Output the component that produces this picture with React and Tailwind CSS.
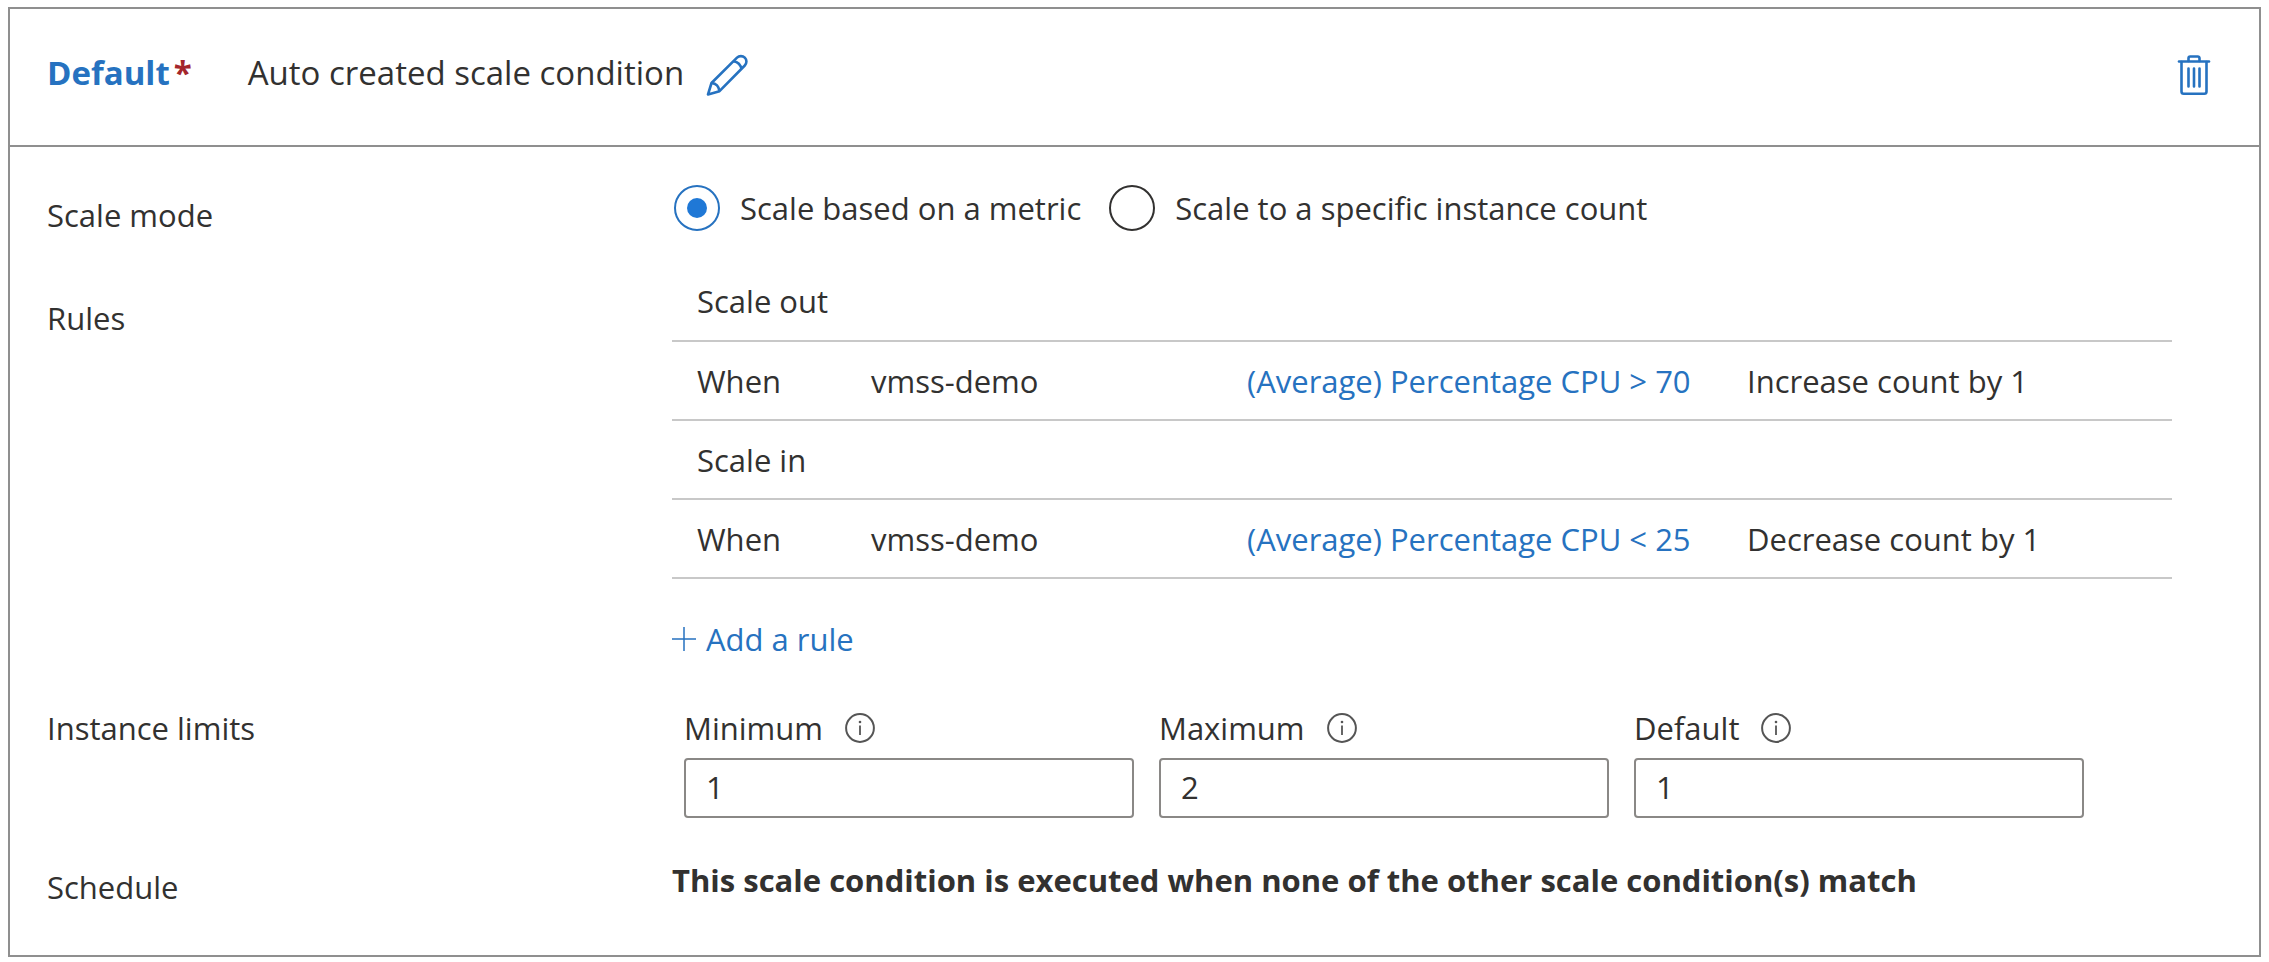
import { useState } from 'react';

const RULE_GROUPS = [
  {
    title: 'Scale out',
    rules: [{ resource: 'vmss-demo', metric: '(Average) Percentage CPU > 70', action: 'Increase count by 1' }],
  },
  {
    title: 'Scale in',
    rules: [{ resource: 'vmss-demo', metric: '(Average) Percentage CPU < 25', action: 'Decrease count by 1' }],
  },
];

const MODES = [
  { id: 'metric', label: 'Scale based on a metric' },
  { id: 'count', label: 'Scale to a specific instance count' },
];

const LIMITS = [
  { id: 'minimum', label: 'Minimum', value: '1' },
  { id: 'maximum', label: 'Maximum', value: '2' },
  { id: 'default', label: 'Default', value: '1' },
];

function PencilIcon() {
  return (
    <svg viewBox="0 0 42 42" className="w-[42px] h-[42px]" fill="none" stroke="currentColor" strokeWidth="2.6" strokeLinejoin="round" aria-hidden="true">
      <path d="M2 40.5 5.5 29 31 3.7a5.5 5.5 0 0 1 7.8 7.8L13.5 37.2Z" />
      <path d="M27.5 7.2c4.2.6 7.2 3.6 8 8" />
      <path d="M5.5 29c4.3.4 7.4 3.6 8 8.2" />
    </svg>
  );
}

function TrashIcon() {
  return (
    <svg viewBox="0 0 34 42" className="w-[34px] h-[42px]" fill="none" stroke="currentColor" strokeWidth="2.6" strokeLinecap="round" strokeLinejoin="round" aria-hidden="true">
      <path d="M2 7.5h30" />
      <path d="M11.5 7V4.2a1.7 1.7 0 0 1 1.7-1.7h7.6a1.7 1.7 0 0 1 1.7 1.7V7" />
      <path d="M4.5 8v29.5a2.2 2.2 0 0 0 2.2 2.2h20.600a2.2 2.2 0 0 0 2.200-2.200V8" />
      <path d="M11.5 14.5v18M17 14.5v18M22.5 14.5v18" />
    </svg>
  );
}

function PlusIcon() {
  return (
    <svg viewBox="0 0 24 24" className="w-6 h-6" fill="none" stroke="currentColor" strokeWidth="1.5" aria-hidden="true">
      <path d="M12 0v24M0 12h24" />
    </svg>
  );
}

function InfoIcon() {
  return (
    <svg viewBox="0 0 30 30" className="w-[30px] h-[30px] text-[#555555]" fill="none" stroke="currentColor" aria-hidden="true">
      <circle cx="15" cy="15" r="13.9" strokeWidth="2" />
      <path d="M15 12.5v9.5" strokeWidth="1.8" />
      <circle cx="15" cy="9" r="1.3" fill="currentColor" stroke="none" />
    </svg>
  );
}

function FormRow({ label, labelClass, children }) {
  return (
    <div className="flex items-start">
      <div className={`w-[625px] shrink-0 ${labelClass}`}>{label}</div>
      <div className="flex-1 min-w-0">{children}</div>
    </div>
  );
}

function RulesTable() {
  return (
    <table className="w-full table-fixed border-collapse text-left">
      <colgroup>
        <col className="w-[199px]" />
        <col className="w-[376px]" />
        <col className="w-[500px]" />
        <col />
      </colgroup>
      {RULE_GROUPS.map((group) => (
        <tbody key={group.title}>
          <tr className="h-[79px] border-b-2 border-[#c8c8c8]">
            <th colSpan={4} scope="rowgroup" className="pl-[25px] font-normal">{group.title}</th>
          </tr>
          {group.rules.map((rule) => (
            <tr key={rule.metric} className="h-[79px] border-b-2 border-[#c8c8c8]">
              <td className="pl-[25px]">When</td>
              <td>{rule.resource}</td>
              <td><a href="#rule" className="text-[#2672c0]">{rule.metric}</a></td>
              <td>{rule.action}</td>
            </tr>
          ))}
        </tbody>
      ))}
    </table>
  );
}

export default function App() {
  const [mode, setMode] = useState('metric');
  const [limits, setLimits] = useState({ minimum: '1', maximum: '2', default: '1' });

  return (
    <main className="bg-white px-2 py-[7px] font-['Open_Sans','Noto_Sans',sans-serif] text-[31px] leading-[44px] text-[#323130]">
      <section className="border-2 border-[#8f8f8f]">
        <header className="flex items-center h-[138px] pl-[37px] pr-12 pb-1 border-b-2 border-[#8f8f8f]">
          <div className="flex gap-14 pb-1 text-[33px]">
            <h2 className="font-bold text-[#2672c0]">
              Default<span className="ml-1 text-[#a4262c]">*</span>
            </h2>
            <span>Auto created scale condition</span>
          </div>
          <button type="button" aria-label="Edit name" className="ml-[22px] text-[#2672c0]"><PencilIcon /></button>
          <button type="button" aria-label="Delete condition" className="ml-auto text-[#2672c0]"><TrashIcon /></button>
        </header>

        <div className="pl-[37px] pt-[38px] pb-[46px]">
          <FormRow label="Scale mode" labelClass="pt-2">
            <div className="flex items-center gap-7 pl-[2px]">
              {MODES.map((m) => (
                <label key={m.id} className="flex items-center gap-5">
                  <input
                    type="radio"
                    name="mode"
                    checked={mode === m.id}
                    onChange={() => setMode(m.id)}
                    className="appearance-none flex items-center justify-center w-[46px] h-[46px] rounded-full border-2 border-[#323130] checked:border-[#2672c0] checked:before:block checked:before:w-5 checked:before:h-5 checked:before:rounded-full checked:before:bg-[#1f78d6] checked:before:content-['']"
                  />
                  {m.label}
                </label>
              ))}
            </div>
          </FormRow>

          <div className="mt-[25px]">
            <FormRow label="Rules" labelClass="pt-[34px]">
              <div className="pr-[87px]">
                <RulesTable />
              </div>
              <button type="button" className="mt-[38px] flex items-center gap-[10px] text-[#2672c0]">
                <PlusIcon />
                Add a rule
              </button>
            </FormRow>
          </div>

          <div className="mt-[45px]">
            <FormRow label="Instance limits" labelClass="">
              <div className="grid grid-cols-3 gap-[25px] pl-3 pr-[175px]">
                {LIMITS.map((limit) => (
                  <div key={limit.id}>
                    <div className="flex items-center gap-[22px]">
                      <label htmlFor={limit.id}>{limit.label}</label>
                      <InfoIcon />
                    </div>
                    <input
                      id={limit.id}
                      type="text"
                      value={limits[limit.id]}
                      onChange={(e) => setLimits({ ...limits, [limit.id]: e.target.value })}
                      className="block w-full h-[60px] mt-2 px-5 pb-[2px] rounded-sm border-2 border-[#8a8886]"
                    />
                  </div>
                ))}
              </div>
            </FormRow>
          </div>

          <div className="mt-10">
            <FormRow label="Schedule" labelClass="pt-[7px]">
              <p className="font-bold">This scale condition is executed when none of the other scale condition(s) match</p>
            </FormRow>
          </div>
        </div>
      </section>
    </main>
  );
}
